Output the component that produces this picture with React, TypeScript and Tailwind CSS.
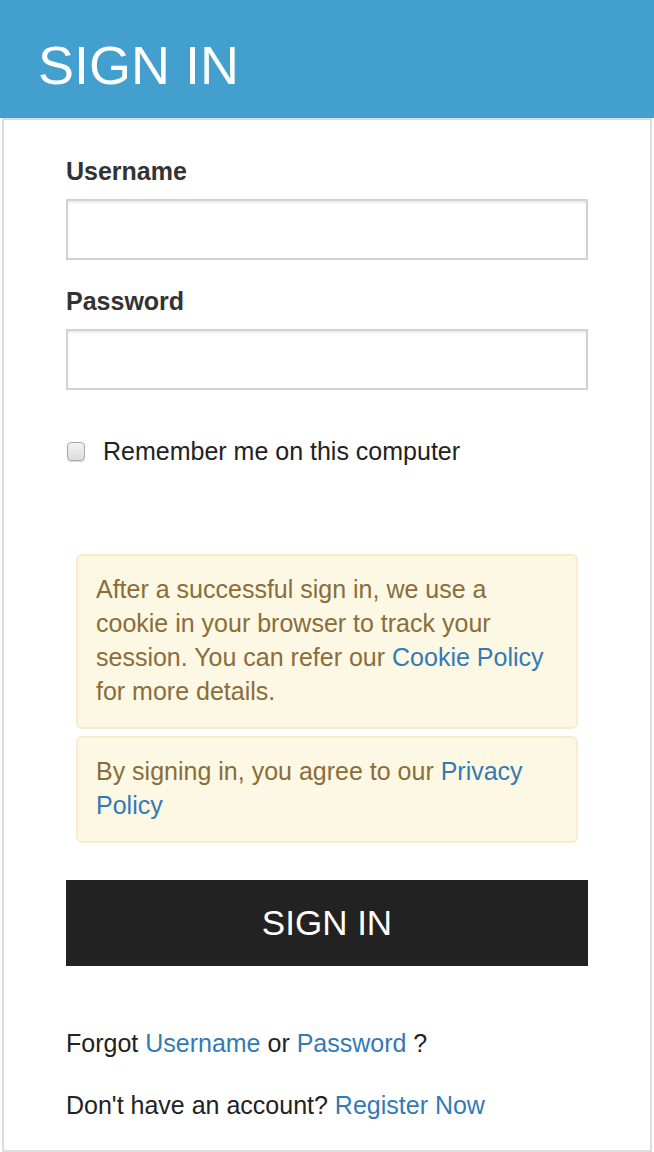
import React from "react";

function Field({ label, type }: { label: string; type: string }) {
  return (
    <div className="flex flex-col">
      <label className="text-[25px] leading-[35px] font-bold text-[#333]">{label}</label>
      <input
        type={type}
        className="mt-[10px] h-[61px] w-full border-2 border-[#d2d2d2] bg-white shadow-[inset_0_2px_2px_rgba(0,0,0,0.08)] outline-none"
      />
    </div>
  );
}

export default function App() {
  return (
    <div className="h-[1152px] flex flex-col bg-white font-['Liberation_Sans',Arial,sans-serif]">
      <div className="h-[118px] shrink-0 bg-[#429fce] pl-[38px] pt-[38px]">
        <h1 className="text-[54px] leading-none text-white">SIGN IN</h1>
      </div>

      <div className="flex-1 mx-[2px] border-2 border-[#dcdcdc] px-[62px] pt-[34px]">
        <Field label="Username" type="text" />
        <div className="mt-[24px]">
          <Field label="Password" type="password" />
        </div>

        <label className="mt-[44px] flex items-center text-[25px] leading-[35px] text-[#222]">
          <span className="ml-[1px] h-[19px] w-[18px] rounded-[4px] border border-[#a9a9a9] bg-gradient-to-b from-[#f4f4f4] to-[#dcdcdc] shadow-[0_1px_1px_rgba(0,0,0,0.15)]" />
          <span className="ml-[18px]">Remember me on this computer</span>
        </label>

        <div className="mt-[85px] mx-[10px] flex flex-col gap-[7px] text-[25px] leading-[34px] text-[#8a6d3b]">
          <div className="rounded-[6px] border-2 border-[#faebcc] bg-[#fcf8e3] pl-[18px] pr-[22px] pt-[16px] pb-[19px]">
            After a successful sign in, we use a cookie in your browser to track your session. You
            can refer our <a className="text-[#337ab7]">Cookie Policy</a> for more details.
          </div>
          <div className="rounded-[6px] border-2 border-[#faebcc] bg-[#fcf8e3] pl-[18px] pr-[22px] pt-[16px] pb-[19px]">
            By signing in, you agree to our <a className="text-[#337ab7]">Privacy Policy</a>
          </div>
        </div>

        <button className="mt-[37px] h-[86px] w-full bg-[#222] text-[35px] text-white">SIGN IN</button>

        <p className="mt-[60px] text-[25px] leading-[35px] text-[#222]">
          Forgot <a className="text-[#337ab7]">Username</a> or <a className="text-[#337ab7]">Password</a> ?
        </p>
        <p className="mt-[27px] text-[25px] leading-[35px] text-[#222]">
          Don't have an account? <a className="text-[#337ab7]">Register Now</a>
        </p>
      </div>
    </div>
  );
}
